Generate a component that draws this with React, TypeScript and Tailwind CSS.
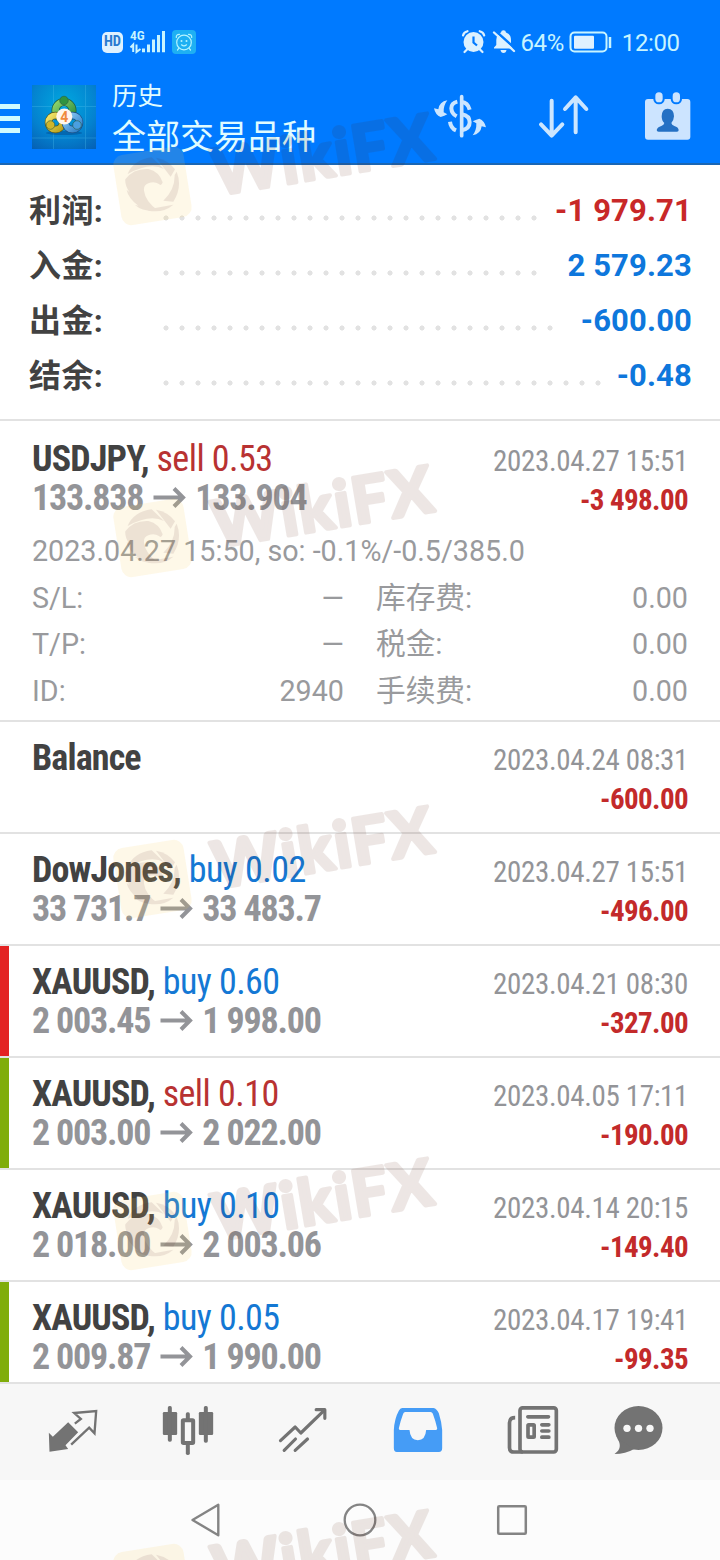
import type { ReactNode } from "react";

type Deal = {
  symbol: string;
  side?: "buy" | "sell";
  lots?: string;
  from?: string;
  to?: string;
  date: string;
  amount: string;
  mark?: "red" | "green";
};

const summary = [
  { label: "利润", value: "-1 979.71", color: "text-[#c82828]", dots: "w-[384px]" },
  { label: "入金", value: "2 579.23", color: "text-[#0e77dc]", dots: "w-[384px]" },
  { label: "出金", value: "-600.00", color: "text-[#0e77dc]", dots: "w-[400px]" },
  { label: "结余", value: "-0.48", color: "text-[#0e77dc]", dots: "w-[448px]" },
];

const deals: Deal[] = [
  { symbol: "Balance", date: "2023.04.24 08:31", amount: "-600.00" },
  { symbol: "DowJones", side: "buy", lots: "0.02", from: "33 731.7", to: "33 483.7", date: "2023.04.27 15:51", amount: "-496.00" },
  { symbol: "XAUUSD", side: "buy", lots: "0.60", from: "2 003.45", to: "1 998.00", date: "2023.04.21 08:30", amount: "-327.00", mark: "red" },
  { symbol: "XAUUSD", side: "sell", lots: "0.10", from: "2 003.00", to: "2 022.00", date: "2023.04.05 17:11", amount: "-190.00", mark: "green" },
  { symbol: "XAUUSD", side: "buy", lots: "0.10", from: "2 018.00", to: "2 003.06", date: "2023.04.14 20:15", amount: "-149.40" },
  { symbol: "XAUUSD", side: "buy", lots: "0.05", from: "2 009.87", to: "1 990.00", date: "2023.04.17 19:41", amount: "-99.35", mark: "green" },
];

const details = [
  ["S/L:", "—", "库存费:", "0.00"],
  ["T/P:", "—", "税金:", "0.00"],
  ["ID:", "2940", "手续费:", "0.00"],
];

function StatusBar() {
  return (
    <div className="flex h-[83px] items-start pt-[29px] pl-[102px] text-[#c8f4ff]">
      <div className="mt-[3px] flex h-[21px] w-[21px] items-center justify-center rounded-[5px] bg-[#dff1ff] text-[14.5px] leading-none font-bold text-[#2a7bd0] font-['Roboto_Condensed',sans-serif]">
        HD
      </div>
      <svg className="ml-[7px] overflow-visible" width="36" height="25" viewBox="0 0 36 25">
        <text x="0" y="10.8" fontSize="13.500" fontWeight="600" fontFamily="Roboto Condensed, sans-serif" fill="#c8f4ff">4G</text>
        <path d="M0.5 18.500L3.200 15.500V23M6.500 15.500V23L10.500 20" fill="none" stroke="#c8f4ff" strokeWidth="2" />
        <path d="M13.500 19.500V23.300M18.500 15.500V23.300M23.500 10.500V23.300M28.500 6V23.300M33.500 2V23.300" stroke="#c8f4ff" strokeWidth="3" />
      </svg>
      <svg className="ml-[6px] mt-[1px]" width="24" height="24" viewBox="0 0 24 24">
        <rect width="24" height="24" rx="4" fill="#1eb0f3" />
        <g fill="none" stroke="#b4f3ff" strokeWidth="1.200" strokeLinecap="round">
          <circle cx="12" cy="12.500" r="7.300" />
          <path d="M4.300 7.500Q4 4.500 7.500 4.300M19.700 7.500Q20 4.500 16.500 4.300M7 18.200L5.500 20M17 18.200L18.500 20M9.500 14.800Q12 17 14.500 14.800" />
        </g>
        <circle cx="9.500" cy="11" r="1" fill="#b4f3ff" />
        <circle cx="14.500" cy="11" r="1" fill="#b4f3ff" />
      </svg>
      <svg className="ml-[265px]" width="55" height="26" viewBox="0 0 55 26">
        <g fill="#dcf1ff">
          <circle cx="12.500" cy="13" r="10" />
          <path d="M6.500 20L3.500 23M18.500 20L21.500 23M2 6.500Q2.700 3.200 6.500 2.200M23.200 6.500Q22.500 3.200 18.700 2.200" stroke="#dcf1ff" strokeWidth="2.200" fill="none" strokeLinecap="round" />
          <path d="M12.500 7.500V13.500L16 16.500" stroke="#007aff" strokeWidth="2.200" fill="none" />
          <path d="M33 19.500V18.500L35.300 16V11Q35.500 5 40 3.500Q40.200 1.200 42.500 1.200Q44.800 1.200 45 3.500Q50 5 50 11V16L52 19.500Z" />
          <path d="M39.500 21H45.500Q45 24 42.500 24Q40 24 39.500 21Z" />
          <path d="M33 0.500L54 19.500" stroke="#007aff" strokeWidth="2.500" />
          <path d="M33 3.500L53 22" stroke="#dcf1ff" strokeWidth="2.300" strokeLinecap="round" />
        </g>
      </svg>
      <span className="ml-[4.500px] text-[24px] leading-[29px] tracking-[-0.4px] whitespace-nowrap font-['Roboto',sans-serif]">64%</span>
      <svg className="ml-[5.500px] mt-[2px]" width="43" height="22" viewBox="0 0 43 22">
        <rect x="1.500" y="1.500" width="36" height="19" rx="4" fill="none" stroke="#c8f4ff" strokeWidth="2" />
        <rect x="5" y="4.700" width="20" height="13" rx="1" fill="#dff1ff" />
        <path d="M41 6V17" stroke="#c8f4ff" strokeWidth="2.500" />
      </svg>
      <span className="ml-[9.500px] text-[24px] leading-[29px] tracking-[-0.4px] whitespace-nowrap font-['Roboto',sans-serif]">12:00</span>
    </div>
  );
}

function AppLogo() {
  return (
    <svg width="64" height="64" viewBox="0 0 64 64">
      <defs>
        <radialGradient id="bg" cx="0.5" cy="0.3" r="0.85">
          <stop offset="0" stopColor="#00a8e0" />
          <stop offset="0.6" stopColor="#0482cf" />
          <stop offset="1" stopColor="#0560b4" />
        </radialGradient>
        <linearGradient id="gr" x1="0" y1="0" x2="1" y2="1"><stop offset="0" stopColor="#8fd36a" /><stop offset="1" stopColor="#2a8c3c" /></linearGradient>
        <linearGradient id="ye" x1="0" y1="0" x2="1" y2="1"><stop offset="0" stopColor="#f2e46a" /><stop offset="1" stopColor="#b9a11c" /></linearGradient>
        <linearGradient id="bl" x1="0" y1="0" x2="1" y2="1"><stop offset="0" stopColor="#8ccbf5" /><stop offset="1" stopColor="#2f7fc8" /></linearGradient>
      </defs>
      <rect width="64" height="64" fill="url(#bg)" />
      <path d="M0 21.500H64M0 53H64M21.500 0V64M53.500 0V64" stroke="#4fc0ee" strokeWidth="0.800" opacity="0.4" />
      <ellipse cx="32" cy="48" rx="18" ry="2" fill="#034a90" opacity="0.5" />
      <g fill="none">
        <circle cx="32" cy="25.500" r="8.500" stroke="#1f5a3a" strokeWidth="8" />
        <circle cx="32" cy="25.500" r="8.500" stroke="url(#gr)" strokeWidth="6.600" />
        <circle cx="23.500" cy="37.500" r="7" stroke="#5a5a1c" strokeWidth="7.500" />
        <circle cx="23.500" cy="37.500" r="7" stroke="url(#ye)" strokeWidth="6.200" />
        <circle cx="40.500" cy="37.500" r="7" stroke="#1c4f86" strokeWidth="7.500" />
        <circle cx="40.500" cy="37.500" r="7" stroke="url(#bl)" strokeWidth="6.200" />
      </g>
      <g stroke="#2b5c40" strokeWidth="0.600">
        <circle cx="32" cy="15.500" r="4.300" fill="#2f9440" />
        <circle cx="18.500" cy="40" r="4.300" fill="#cfb52a" />
        <circle cx="45" cy="40" r="4.300" fill="#4a9fe0" />
      </g>
      <circle cx="32.300" cy="31.500" r="8" fill="#fff6ec" />
      <text x="32.300" y="36.500" textAnchor="middle" fontSize="14" fontWeight="700" fontFamily="Roboto, sans-serif" fill="#f08a3c">4</text>
    </svg>
  );
}

function Header() {
  return (
    <header className="h-[165px] w-full border-b-2 border-[#1a66b4] bg-[#007aff]">
      <StatusBar />
      <div className="flex h-[80px] items-start">
        <div className="mt-[21px] flex w-[20px] shrink-0 flex-col gap-[7px]">
          <div className="h-[5px] bg-[#cffaff]" />
          <div className="h-[5px] bg-[#cffaff]" />
          <div className="h-[5px] bg-[#cffaff]" />
        </div>
        <div className="mt-[2px] ml-[12px] shrink-0"><AppLogo /></div>
        <div className="ml-[16px] w-[317px] shrink-0 whitespace-nowrap text-[#e0fcff] font-['Noto_Sans_CJK_SC',sans-serif]">
          <div className="mt-[-8px] text-[25.500px] leading-[38px]">历史</div>
          <div className="text-[34px] leading-[44px]">全部交易品种</div>
        </div>
        <svg className="mt-[10px] ml-[3px] shrink-0" width="54" height="50" viewBox="12 24 162 150">
          <g fill="none" stroke="#cce6ff" strokeWidth="12">
            <path d="M101 35V152" strokeWidth="11" strokeLinecap="round" />
            <path d="M88 50Q70 54 70 70Q71 86 86 94" />
            <path d="M101 51Q119 52 125 74" />
            <path d="M101 88Q125 92 125 112Q125 132 101 136" />
            <path d="M66 110Q68 129 84 136" />
          </g>
          <path d="M58 46Q34 50 31 73L18 70Q22 90 38 96Q50 93 58 88L47 82Q46 62 58 46Z" fill="#cce6ff" />
          <path d="M58 46Q34 50 31 73L18 70Q22 90 38 96Q50 93 58 88L47 82Q46 62 58 46Z" fill="#cce6ff" transform="rotate(180 96 98.500)" />
        </svg>
        <svg className="ml-[51px] mt-[10px] shrink-0" width="54" height="50" viewBox="328 24 162 150">
          <path d="M372 47V150M340 118L372 152L404 118M444 142V38M412 72L444 37L476 72" fill="none" stroke="#cce6ff" strokeWidth="12" strokeLinecap="round" strokeLinejoin="round" />
        </svg>
        <svg className="ml-[50px] mt-[6px] shrink-0" width="54" height="54" viewBox="724 208 162 162">
          <rect x="736" y="238" width="136" height="122" rx="9" fill="#cce4ff" />
          <rect x="761" y="212" width="34" height="42" rx="16" fill="#007aff" />
          <rect x="813" y="212" width="34" height="42" rx="16" fill="#007aff" />
          <rect x="767" y="218" width="22" height="30" rx="11" fill="#cce4ff" />
          <rect x="819" y="218" width="22" height="30" rx="11" fill="#cce4ff" />
          <path d="M804 267Q823 268 823 290Q822 304 815 310Q816 316 824 319Q836 322 837 331Q837 336 832 336H777Q771 336 771 331Q773 322 785 319Q793 316 794 310Q786 304 786 290Q786 268 804 267Z" fill="#2470c4" />
        </svg>
      </div>
    </header>
  );
}

function Arrow() {
  return (
    <svg className="mx-[9.500px] mb-[2px] inline-block" width="33" height="23" viewBox="0 0 33 23">
      <path d="M0.500 11.500H30M21 2.500L30 11.500L21 20.500" fill="none" stroke="#939498" strokeWidth="4" />
    </svg>
  );
}

function DealRow({ d }: { d: Deal }) {
  return (
    <div className="flex justify-between whitespace-nowrap font-['Roboto_Condensed',sans-serif]">
      <div className="pt-px">
        <div className="text-[36px] leading-[39px] tracking-[-0.550px]">
          <span className="font-bold tracking-[-0.850px] text-[#424242]">{d.symbol}{d.side ? "," : ""}</span>
          {d.side && (
            <span className={d.side === "buy" ? "text-[#1478d4]" : "text-[#b83232]"}> {d.side} {d.lots}</span>
          )}
        </div>
        {d.from && (
          <div className="flex items-center text-[36px] leading-[39px] font-bold tracking-[-1.200px] text-[#939498]">
            {d.from}<Arrow />{d.to}
          </div>
        )}
      </div>
      <div className="pt-[3px] text-right text-[29px] leading-[39px]">
        <div className="tracking-[-0.350px] text-[#939498]">{d.date}</div>
        <div className="font-bold tracking-[-0.600px] text-[#c32a2a]">{d.amount}</div>
      </div>
    </div>
  );
}

function Watermark({ top }: { top: string }) {
  return (
    <svg className={`pointer-events-none absolute left-0 overflow-visible ${top}`} width="500" height="160" viewBox="0 0 500 160">
      <g transform="translate(0 -87)">
        <rect x="117" y="150.500" width="71" height="71" rx="10" fill="#fad05a" opacity="0.14" transform="rotate(-9 152.500 186)" />
        <g opacity="0.095" transform="translate(0 20) scale(0.33333)" fill="#551925">
          <path d="M383 462Q400 420 455 412L492 447Q450 425 383 462Z" />
          <path d="M468 413Q505 420 525 448L512 470Z" />
          <path d="M530 455Q548 500 520 545L490 542Q525 510 524 465Z" />
          <path d="M445 568L520 554Q490 580 445 572Z" />
          <path d="M376 478Q400 445 445 447Q478 455 488 487Q484 500 477 492Q462 483 445 490Q430 495 432 512Q436 545 475 572Q430 577 405 555L415 557Q385 535 380 510L388 516Q374 495 376 478Z" />
        </g>
        <g opacity="0.1" transform="translate(216.500 195.500) rotate(-9.500)">
          <text x="0" y="0" fontSize="64" fontWeight="700" fontFamily="Lato, sans-serif" textLength="222" lengthAdjust="spacing" fill="#551905" stroke="#551905" strokeWidth="4" strokeLinejoin="round">WikiFX</text>
        </g>
      </g>
    </svg>
  );
}

function Tab({ box, children }: { box: string; children: ReactNode }) {
  return <svg width="115" height="96" viewBox={box}>{children}</svg>;
}

function TabBar() {
  return (
    <nav className="flex h-[98px] border-t-2 border-[#e2e2e2] bg-[#f7f7f7] pl-[15px]">
      <Tab box="46.5 12 345 288">
        <path d="M206 127L236 157L198 196L206 207L150 215L148 158L160 170Z" fill="#737373" />
        <path d="M226 131L244 117L224 99L290 93L285 160L269 143L215 194" fill="none" stroke="#737373" strokeWidth="7" />
      </Tab>
      <Tab box="391.5 12 345 288">
        <g fill="#737373">
          <rect x="490" y="96" width="43" height="69" rx="4" />
          <rect x="505" y="78" width="12" height="107" rx="5" />
          <rect x="598" y="96" width="43" height="69" rx="4" />
          <rect x="613" y="78" width="12" height="110" rx="5" />
          <rect x="559" y="97" width="12" height="30" rx="5" />
          <rect x="559" y="185" width="12" height="40" rx="5" />
        </g>
        <rect x="550" y="121" width="31" height="68" rx="2" fill="#f7f7f7" stroke="#737373" strokeWidth="12" />
      </Tab>
      <Tab box="736.5 12 345 288">
        <g fill="none" stroke="#737373" strokeWidth="9.500" strokeLinecap="round" strokeLinejoin="round">
          <path d="M843 182L887 141L904 159L974 91" />
          <path d="M950 89H976V115" />
          <path d="M854 211L888 177M887 211L924 177" />
        </g>
      </Tab>
      <Tab box="1.5 12 345 288">
        <path fillRule="evenodd" fill="#459cf6" d="M128 84H222Q232 86 238 100Q246 125 248 150V205Q248 216 238 216H112Q103 216 103 205V150Q105 115 118 92Q122 84 128 84ZM137 96Q133 96 131 101Q122 125 118 145Q117 150 122 150H150Q152 180 175 181Q198 180 200 150H229Q234 150 233 145Q229 125 220 101Q218 96 213 96Z" />
      </Tab>
      <Tab box="346.5 12 345 288">
        <g fill="none" stroke="#737373" strokeWidth="11">
          <path d="M467 113Q450 113 450 128V203Q450 216 463 216H490" />
          <rect x="481.500" y="83.500" width="109" height="132.500" rx="8" />
          <rect x="505.500" y="134.500" width="18.500" height="37" rx="2" />
          <path d="M505 110.500H567M547 134.500H568M547 153H568M547 171.500H568" strokeLinecap="round" />
        </g>
      </Tab>
      <Tab box="691.5 12 345 288">
        <ellipse cx="837" cy="144" rx="72" ry="66" fill="#737373" />
        <path d="M773 175Q792 204 765 222Q798 222 824 207Z" fill="#737373" />
        <g fill="#f7f7f7">
          <circle cx="802.500" cy="145" r="11" />
          <circle cx="837" cy="145" r="11" />
          <circle cx="871.500" cy="145" r="11" />
        </g>
      </Tab>
    </nav>
  );
}

function SystemNav() {
  return (
    <div className="flex h-[80px] items-center justify-center gap-[114px] bg-[#fcfcfc]">
      <svg width="40" height="40" viewBox="0 0 40 40">
        <path d="M6.500 20L32.300 4.800V35.200Z" fill="none" stroke="#848484" strokeWidth="2.400" strokeLinejoin="round" />
      </svg>
      <svg width="40" height="40" viewBox="0 0 40 40">
        <circle cx="20" cy="20" r="15.300" fill="none" stroke="#848484" strokeWidth="2.300" />
      </svg>
      <svg width="40" height="40" viewBox="0 0 40 40">
        <rect x="4.200" y="6.200" width="27.600" height="27.600" rx="1" fill="none" stroke="#848484" strokeWidth="2.500" />
      </svg>
    </div>
  );
}

export default function App() {
  return (
    <div className="relative flex h-[1560px] w-[720px] flex-col overflow-hidden bg-white font-['Roboto','Noto_Sans_CJK_SC',sans-serif]">
      <Header />

      <section className="h-[256px] border-b-2 border-[#e2e2e2] pt-[18px] pr-[28px] pl-[29px]">
        {summary.map((s) => (
          <div key={s.label} className="flex h-[55px] items-center whitespace-nowrap text-[31px] font-bold">
            <div className="mt-[1px] w-[128.500px] text-[32px] tracking-[0.400px] text-[#424242]">{s.label}:</div>
            <div className={`mt-[14px] h-[16px] bg-[radial-gradient(circle,#e2e2e2_2.200px,transparent_2.900px)] bg-[length:16px_16px] ${s.dots}`} />
            <div className={`mt-[1px] ml-auto tracking-[0.150px] ${s.color}`}>{s.value}</div>
          </div>
        ))}
      </section>

      <section className="h-[301px] border-b-2 border-[#e2e2e2] px-8 pt-[18px]">
        <DealRow d={{ symbol: "USDJPY", side: "sell", lots: "0.53", from: "133.838", to: "133.904", date: "2023.04.27 15:51", amount: "-3 498.00" }} />
        <div className="mt-[8px] text-[28.700px] leading-[46.600px] whitespace-nowrap text-[#999a9d]">
          <div>2023.04.27 15:50, so: -0.1%/-0.5/385.0</div>
          {details.map(([a, b, c, e]) => (
            <div key={a} className="flex h-[46.600px] gap-8">
              <div className="flex flex-1 justify-between"><span>{a}</span><span>{b}</span></div>
              <div className="flex flex-1 justify-between"><span className="text-[29.700px]">{c}</span><span>{e}</span></div>
            </div>
          ))}
        </div>
      </section>

      <section className="h-[660px] overflow-hidden">
        {deals.map((d, i) => (
          <div key={i} className="flex h-[112px] border-b-2 border-[#e2e2e2]">
            <div className={d.mark === "red" ? "w-[9px] bg-[#e32222]" : d.mark === "green" ? "w-[9px] bg-[#80ad0a]" : "w-[9px]"} />
            <div className="flex-1 pt-[16px] pr-8 pl-[23px]"><DealRow d={d} /></div>
          </div>
        ))}
      </section>

      <TabBar />
      <SystemNav />

      <Watermark top="top-[87px]" />
      <Watermark top="top-[439px]" />
      <Watermark top="top-[780px]" />
      <Watermark top="top-[1132px]" />
      <Watermark top="top-[1484px]" />
    </div>
  );
}
